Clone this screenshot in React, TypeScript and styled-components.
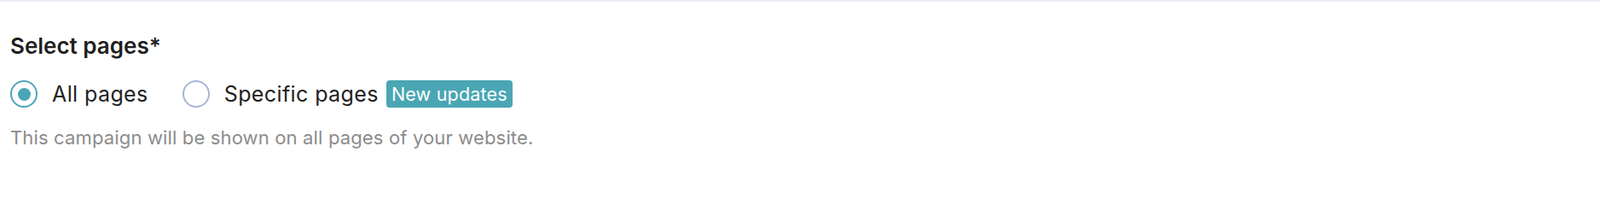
import React, { useState } from 'react';
import styled, { createGlobalStyle } from 'styled-components';

const GlobalStyle = createGlobalStyle`
    html, body {
        margin: 0;
        padding: 0;
        background: #ffffff;
        font-family: 'Inter', 'Liberation Sans', sans-serif;
    }
`;

const Section = styled.section`
    border-top: 2px solid #e9edf5;
    padding: 36px 12px 0;
`;

const Title = styled.h3`
    margin: 0;
    font-size: 26px;
    line-height: 32px;
    font-weight: 600;
    color: #1f1f1f;
`;

const Options = styled.div`
    display: flex;
    align-items: center;
    margin-top: 24px;
`;

const Option = styled.label`
    display: flex;
    align-items: center;
    cursor: pointer;
    margin-right: 40px;
    font-size: 25px;
    line-height: 32px;
    letter-spacing: 0.4px;
    color: #222;
`;

const Circle = styled.span<{ $checked: boolean; }>`
    box-sizing: border-box;
    width: 32px;
    height: 32px;
    border-radius: 50%;
    border: 2.5px solid ${(p) => (p.$checked ? '#4aa6b4' : '#a9b4d6')};
    display: flex;
    align-items: center;
    justify-content: center;
    margin-right: 17px;
    flex-shrink: 0;

    &::after {
        content: '';
        width: 15px;
        height: 15px;
        border-radius: 50%;
        background: #4aa6b4;
        display: ${(p) => (p.$checked ? 'block' : 'none')};
    }
`;

const Badge = styled.span`
    margin-left: 9px;
    background: #4aa6b4;
    color: #ffffff;
    font-size: 21.5px;
    line-height: 32px;
    letter-spacing: 0.2px;
    padding: 0 6px;
    border-radius: 4px;
`;

const Hint = styled.p`
    margin: 22px 0 0;
    font-size: 22px;
    line-height: 26px;
    letter-spacing: 0.15px;
    color: #8c8c8c;
`;

const options = [
    { value: 'all', label: 'All pages' },
    { value: 'specific', label: 'Specific pages', badge: 'New updates' },
];

const App: React.FC = () => {
    const [selected, setSelected] = useState('all');

    return (
        <>
            <GlobalStyle />
            <Section>
                <Title>Select pages*</Title>
                <Options>
                    {options.map((option) => (
                        <Option key={option.value} onClick={() => setSelected(option.value)}>
                            <Circle $checked={selected === option.value} />
                            {option.label}
                            {option.badge && <Badge>{option.badge}</Badge>}
                        </Option>
                    ))}
                </Options>
                <Hint>This campaign will be shown on all pages of your website.</Hint>
            </Section>
        </>
    );
};

export default App;
